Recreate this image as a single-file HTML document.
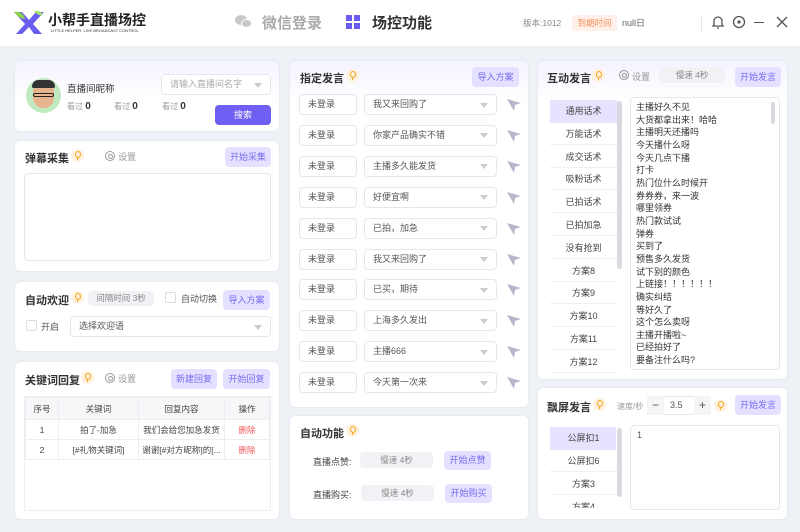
<!DOCTYPE html>
<html><head><meta charset="utf-8"><style>
*{box-sizing:border-box;margin:0;padding:0}
body{width:800px;height:532px;overflow:hidden;background:#eef1f6;font-family:"Liberation Sans","Noto Sans CJK SC",sans-serif;color:#333;position:relative;font-size:9px}
.a{position:absolute}
.hdr{left:0;top:0;width:800px;height:46px;background:#fff}
.p{position:absolute;background:#fff;border-radius:6px;border:1px solid #e8eaf2}
.pg{background:linear-gradient(180deg,#f5f3ff 0,#fff 40px)}
.t{font-size:11px;font-weight:bold;color:#333}
.bulb{position:absolute;width:13px;height:13px;border-radius:50%;background:#fff1dd}
.bulb:after{content:"";position:absolute;left:4px;top:2px;width:4px;height:5px;border:1.3px solid #f5a623;border-radius:50%}
.bulb:before{content:"";position:absolute;left:6px;top:8px;width:1px;height:3px;background:#f5a623}
.btn{position:absolute;background:#e4e0ff;color:#7a6cf0;border-radius:4px;text-align:center;font-size:9px}
.gbox{position:absolute;background:#f2f2f6;color:#888;border-radius:4px;text-align:center;font-size:8.5px}
.inp{position:absolute;background:#fff;border:1px solid #e6e6ee;border-radius:4px;font-size:9px;color:#555;padding-left:8px}
.dd:after{content:"";position:absolute;right:8px;top:50%;margin-top:-2px;border:4px solid transparent;border-top:5px solid #ccc}
.gear{position:absolute;width:10px;height:10px;border:1.3px solid #999;border-radius:50%}
.gear:after{content:"";position:absolute;left:2px;top:2px;width:3px;height:3px;border:1px solid #999;border-radius:50%}
.gray{color:#999}
.li{position:absolute;left:550px;width:67px;text-align:center;font-size:9px;color:#444;height:22px;line-height:22px;border-bottom:1px solid #f0f0f4}
td,th{border:1px solid #eceef2;font-weight:normal;text-align:center;font-size:8.5px;color:#444;height:20px}
th{background:#f6f7f9;height:22px}
</style></head><body>
<div class="a hdr"></div>
<svg class="a" style="left:12px;top:10px" width="34" height="24" viewBox="0 0 34 24"><path d="M2 2 L10 2 L17 10 L24 2 L32 2 L21 14 L30 24 L22 24 L17 17 L10 24 L4 24 L13 14 Z" fill="#6b5cf0"/><path d="M2 2 C8 1 12 4 13 9 C9 9 5 6 2 2Z" fill="#8cd14a"/><path d="M22 1 C26 0 30 2 31 5 C27 6 24 4 22 1Z" fill="#a3e06a"/></svg>
<div class="a" style="left:48px;top:10px;font-size:14px;font-weight:bold;color:#222">小帮手直播场控</div>
<div class="a" style="left:51px;top:28px;font-size:4px;color:#333">LITTLE HELPER, LIVE BROADCAST CONTROL</div>
<div class="a" style="left:235px;top:15px;width:18px;height:13px"><div class="a" style="left:0;top:0;width:12px;height:10px;border-radius:50%;background:#c8c8c8"></div><div class="a" style="left:6px;top:4px;width:11px;height:9px;border-radius:50%;background:#c8c8c8;border:1px solid #fff"></div></div>
<div class="a" style="left:262px;top:12px;font-size:15px;font-weight:bold;color:#aaa">微信登录</div>
<div class="a" style="left:346px;top:15px;width:14px;height:14px;display:grid;grid-template-columns:6px 6px;gap:2px"><i style="background:#6b5cf0"></i><i style="background:#6b5cf0"></i><i style="background:#6b5cf0"></i><i style="background:#6b5cf0"></i></div>
<div class="a" style="left:372px;top:12px;font-size:15px;font-weight:bold;color:#333">场控功能</div>
<div class="a" style="left:523px;top:17px;font-size:8.5px;color:#888">版本:1012</div>
<div class="a" style="left:572px;top:15px;width:45px;height:16px;background:#fff1ea;color:#f5905a;font-size:8.5px;text-align:center;line-height:16px;border-radius:2px">到期时间</div>
<div class="a" style="left:622px;top:16px;font-size:9px;color:#666">null日</div>
<div class="a" style="left:701px;top:15px;width:1px;height:16px;background:#e4e4e4"></div>
<svg class="a" style="left:711px;top:14px" width="14" height="16" viewBox="0 0 14 16"><path d="M3 11 V7 a4 4 0 0 1 8 0 V11 L12 12 H2Z M6 14 h2" fill="none" stroke="#555" stroke-width="1.3"/></svg>
<svg class="a" style="left:732px;top:15px" width="14" height="14"><circle cx="7" cy="7" r="5.5" fill="none" stroke="#555" stroke-width="1.3"/><circle cx="7" cy="7" r="1.6" fill="#555"/></svg>
<div class="a" style="left:754px;top:22px;width:10px;height:1.4px;background:#555"></div>
<svg class="a" style="left:776px;top:16px" width="12" height="12"><path d="M1 1L11 11M11 1L1 11" stroke="#555" stroke-width="1.4"/></svg>

<div class="p pg" style="left:14px;top:60px;width:266px;height:72px"></div>
<div class="a" style="left:26px;top:78px;width:35px;height:35px;border-radius:50%;background:#bfeac0"></div>
<div class="a" style="left:33px;top:82px;width:21px;height:26px;border-radius:9px 9px 10px 10px;background:#e8b48f"></div>
<div class="a" style="left:32px;top:80px;width:23px;height:8px;border-radius:8px 8px 2px 2px;background:#333"></div>
<div class="a" style="left:33px;top:93px;width:21px;height:4px;border:1.2px solid #222;border-radius:2px"></div>
<div class="a" style="left:67px;top:81px;font-size:9.5px;color:#333">直播间昵称</div>
<div class="a gray" style="left:67px;top:101px;font-size:8px">看过 <b style="color:#333;font-size:10px">0</b></div>
<div class="a gray" style="left:114px;top:101px;font-size:8px">看过 <b style="color:#333;font-size:10px">0</b></div>
<div class="a gray" style="left:162px;top:101px;font-size:8px">看过 <b style="color:#333;font-size:10px">0</b></div>
<div class="inp dd" style="left:161px;top:74px;width:110px;height:21px;line-height:19px;color:#aaa">请输入直播间名字</div>
<div class="a" style="left:215px;top:105px;width:56px;height:20px;background:#6f5ff2;color:#fff;border-radius:4px;text-align:center;line-height:20px;font-size:9px">搜索</div>

<div class="p" style="left:14px;top:140px;width:266px;height:132px"></div>
<div class="a t" style="left:25px;top:150px">弹幕采集</div><div class="bulb" style="left:71px;top:149px"></div>
<div class="gear" style="left:105px;top:151px"></div><div class="a gray" style="left:118px;top:150px">设置</div>
<div class="btn" style="left:225px;top:147px;width:46px;height:20px;line-height:20px">开始采集</div>
<div class="a" style="left:24px;top:173px;width:247px;height:88px;border:1px solid #e6e6ee;border-radius:4px"></div>

<div class="p" style="left:14px;top:281px;width:266px;height:71px"></div>
<div class="a t" style="left:25px;top:292px">自动欢迎</div><div class="bulb" style="left:71px;top:291px"></div>
<div class="gbox" style="left:88px;top:291px;width:66px;height:15px;line-height:15px">间隔时间 3秒</div>
<div class="a" style="left:165px;top:292px;width:11px;height:11px;border:1px solid #ddd;border-radius:2px"></div>
<div class="a" style="left:181px;top:292px;color:#555">自动切换</div>
<div class="btn" style="left:223px;top:290px;width:47px;height:20px;line-height:20px">导入方案</div>
<div class="a" style="left:26px;top:320px;width:11px;height:11px;border:1px solid #ddd;border-radius:2px"></div>
<div class="a" style="left:41px;top:320px;color:#555">开启</div>
<div class="inp dd" style="left:70px;top:316px;width:201px;height:21px;line-height:19px">选择欢迎语</div>

<div class="p" style="left:14px;top:361px;width:266px;height:159px"></div>
<div class="a t" style="left:25px;top:372px">关键词回复</div><div class="bulb" style="left:81px;top:371px"></div>
<div class="gear" style="left:105px;top:373px"></div><div class="a gray" style="left:118px;top:372px">设置</div>
<div class="btn" style="left:171px;top:369px;width:46px;height:20px;line-height:20px">新建回复</div>
<div class="btn" style="left:223px;top:369px;width:47px;height:20px;line-height:20px">开始回复</div>
<div class="a" style="left:24px;top:396px;width:247px;height:115px;border:1px solid #eceef2">
<table style="border-collapse:collapse;width:245px;table-layout:fixed"><tr><th style="width:33px">序号</th><th style="width:80px">关键词</th><th style="width:86px">回复内容</th><th>操作</th></tr>
<tr><td>1</td><td>拍了-加急</td><td>我们会给您加急发货</td><td style="color:#f25a5a">删除</td></tr>
<tr><td>2</td><td>[#礼物关键词]</td><td style="white-space:nowrap;overflow:hidden">谢谢[#对方昵称]的[...</td><td style="color:#f25a5a">删除</td></tr></table></div>

<div class="p pg" style="left:289px;top:60px;width:240px;height:348px"></div>
<div class="a t" style="left:300px;top:70px">指定发言</div><div class="bulb" style="left:346px;top:69px"></div>
<div class="btn" style="left:472px;top:67px;width:47px;height:20px;line-height:20px">导入方案</div>
<div id="rows"></div>

<div class="p" style="left:289px;top:415px;width:240px;height:105px"></div>
<div class="a t" style="left:300px;top:425px">自动功能</div><div class="bulb" style="left:346px;top:424px"></div>
<div class="a" style="left:313px;top:455px;color:#444">直播点赞:</div>
<div class="gbox" style="left:360px;top:452px;width:73px;height:16px;line-height:16px">慢速 4秒</div>
<div class="btn" style="left:444px;top:451px;width:47px;height:19px;line-height:19px">开始点赞</div>
<div class="a" style="left:313px;top:488px;color:#444">直播购买:</div>
<div class="gbox" style="left:361px;top:485px;width:73px;height:16px;line-height:16px">慢速 4秒</div>
<div class="btn" style="left:445px;top:484px;width:47px;height:19px;line-height:19px">开始购买</div>

<div class="p pg" style="left:537px;top:60px;width:251px;height:320px"></div>
<div class="a t" style="left:547px;top:70px">互动发言</div><div class="bulb" style="left:592px;top:69px"></div>
<div class="gear" style="left:619px;top:70px"></div><div class="a gray" style="left:632px;top:70px">设置</div>
<div class="gbox" style="left:659px;top:67px;width:66px;height:16px;line-height:16px">慢速 4秒</div>
<div class="btn" style="left:735px;top:67px;width:46px;height:20px;line-height:20px">开始发言</div>
<div class="a" style="left:550px;top:100px;width:67px;height:23px;background:#e6e3ff"></div>
<div class="a" style="left:617px;top:101px;width:5px;height:168px;background:#d9d9e0;border-radius:3px"></div>
<div id="list"></div>
<div class="a" style="left:630px;top:97px;width:150px;height:273px;border:1px solid #e6e6ee;border-radius:4px;overflow:hidden;padding:3px 0 0 5px;font-size:9px;line-height:12.65px;color:#333">主播好久不见<br>大货都拿出来！哈哈<br>主播明天还播吗<br>今天播什么呀<br>今天几点下播<br>打卡<br>热门位什么时候开<br>券券券，来一波<br>哪里领券<br>热门款试试<br>弹券<br>买到了<br>预售多久发货<br>试下别的颜色<br>上链接！！！！！！<br>确实纠结<br>等好久了<br>这个怎么卖呀<br>主播开播啦~<br>已经拍好了<br>要备注什么吗?</div>
<div class="a" style="left:771px;top:102px;width:4px;height:22px;background:#d9d9e0;border-radius:2px"></div>

<div class="p" style="left:537px;top:387px;width:251px;height:133px"></div>
<div class="a t" style="left:547px;top:399px">飘屏发言</div><div class="bulb" style="left:593px;top:398px"></div>
<div class="a gray" style="left:617px;top:401px;font-size:8px">速度/秒</div>
<div class="a" style="left:647px;top:396px;width:64px;height:19px;border:1px solid #e6e6ee;border-radius:3px;background:#fff"></div>
<div class="a" style="left:647px;top:396px;width:17px;height:19px;background:#f5f5f8;text-align:center;line-height:18px;font-size:12px;color:#555">−</div>
<div class="a" style="left:670px;top:400px;font-size:9px;color:#555">3.5</div>
<div class="a" style="left:694px;top:396px;width:17px;height:19px;background:#f5f5f8;text-align:center;line-height:18px;font-size:12px;color:#555">+</div>
<div class="bulb" style="left:714px;top:399px"></div>
<div class="btn" style="left:735px;top:395px;width:46px;height:20px;line-height:20px">开始发言</div>
<div class="a" style="left:550px;top:427px;width:66px;height:23px;background:#e6e3ff"></div>
<div class="a" style="left:617px;top:428px;width:5px;height:69px;background:#d9d9e0;border-radius:3px"></div>
<div class="li" style="top:427px;border:0">公屏扣1</div>
<div class="li" style="top:450px">公屏扣6</div>
<div class="li" style="top:473px">方案3</div>
<div class="li" style="top:496px;height:12px;line-height:22px;overflow:hidden;border:0">方案4</div>
<div class="a" style="left:630px;top:425px;width:150px;height:85px;border:1px solid #e6e6ee;border-radius:4px;padding:4px 6px;font-size:9px;color:#555">1</div>

<script>
var t=["我又来回购了","你家产品确实不错","主播多久能发货","好便宜啊","已拍，加急","我又来回购了","已买，期待","上海多久发出","主播666","今天第一次来"];
var h="";for(var i=0;i<10;i++){var y=94+i*30.9;
h+='<div class="inp" style="left:299px;top:'+y+'px;width:58px;height:21px;line-height:19px">未登录</div>';
h+='<div class="inp dd" style="left:364px;top:'+y+'px;width:133px;height:21px;line-height:19px">'+t[i]+'</div>';
h+='<svg class="a" style="left:506px;top:'+(y+3)+'px" width="16" height="16" viewBox="0 0 16 16"><path d="M1 2 L15 6 L9 8 L8 14 Z" fill="#b9b6cc"/></svg>';}
document.getElementById("rows").innerHTML=h;
var l=["通用话术","万能话术","成交话术","吸粉话术","已拍话术","已拍加急","没有抢到","方案8","方案9","方案10","方案11","方案12"];
h="";for(i=0;i<12;i++){h+='<div class="li" style="top:'+(100+i*22.8)+'px'+(i==0?';border:0':'')+'">'+l[i]+'</div>';}
document.getElementById("list").innerHTML=h;
</script>
</body></html>
